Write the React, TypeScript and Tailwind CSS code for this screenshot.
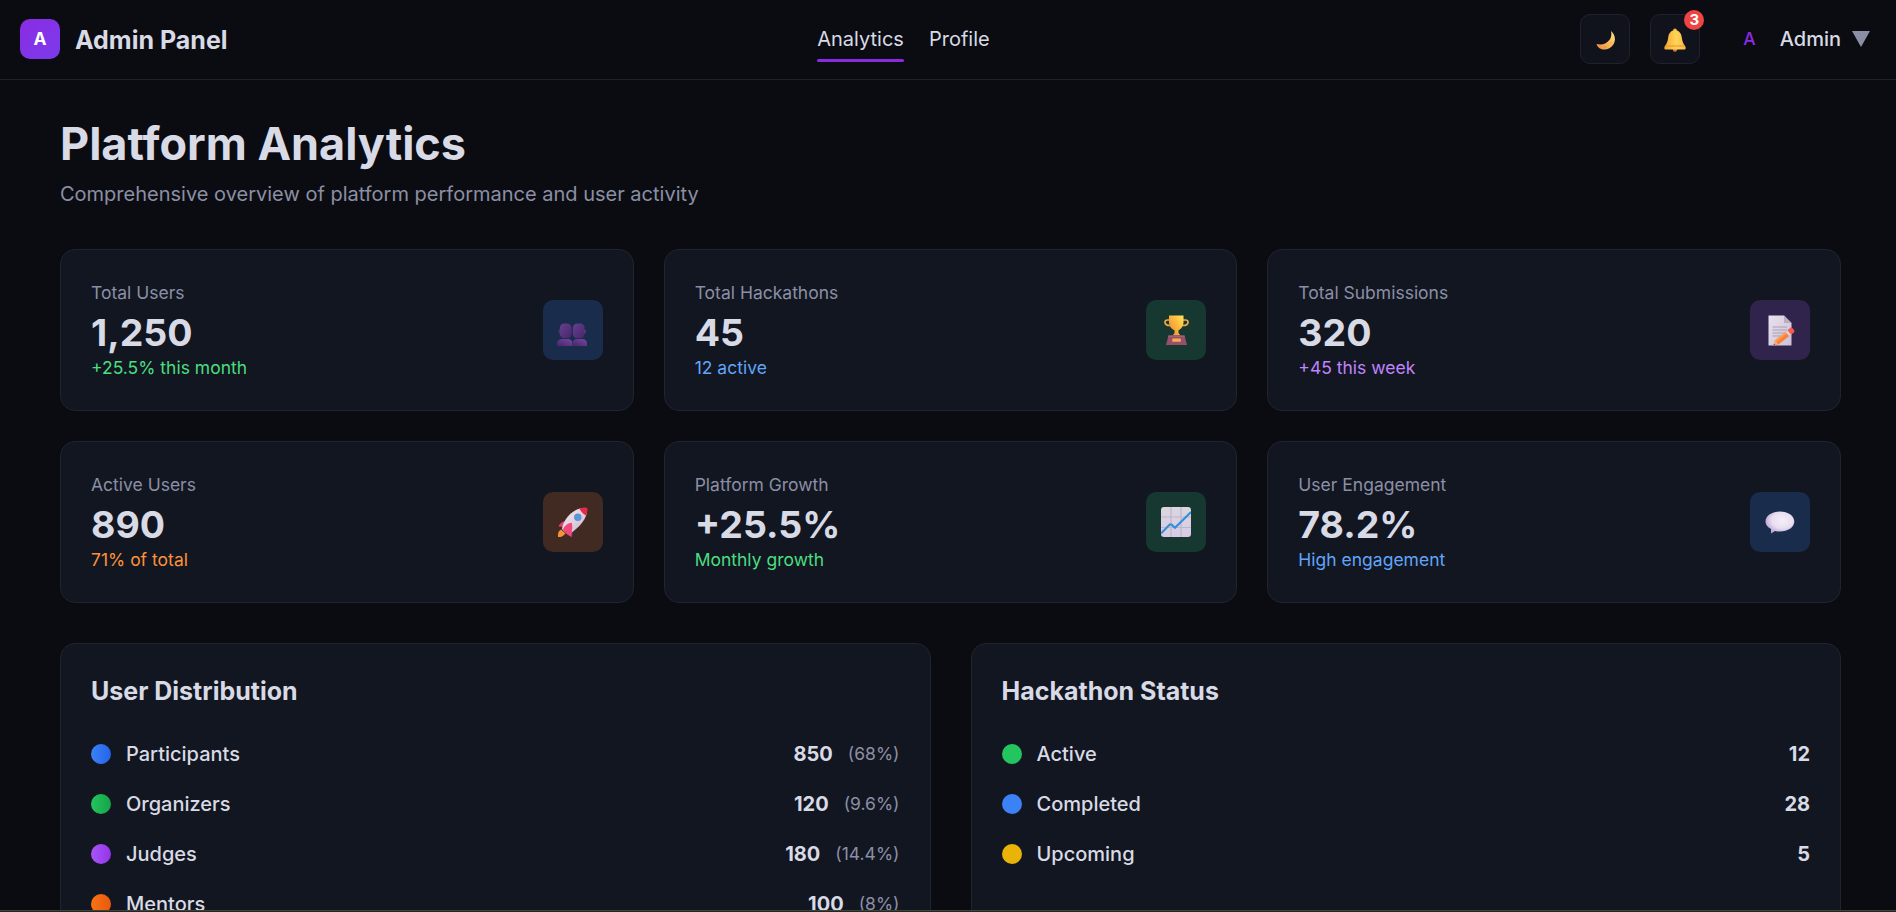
import type { ReactNode } from "react";

function MoonIcon() {
  return (
    <svg width="20" height="20" viewBox="0 0 20 20">
      <defs>
        <linearGradient id="moon" x1="0" y1="1" x2="1" y2="0">
          <stop offset="0" stopColor="#f08a3c" />
          <stop offset="0.5" stopColor="#f9b85a" />
          <stop offset="1" stopColor="#ffe487" />
        </linearGradient>
      </defs>
      <path d="M15 1C19.2 4.400 20 10 17.500 14.200C14.500 19.300 8 21 3.500 18.200C2 17.200 0.800 15.500 0.600 14C6 15.500 11 13.500 13.800 9.500C15.600 6.800 15.600 3.500 15 1Z" fill="url(#moon)" />
      <circle cx="9" cy="17" r="1.200" fill="#e89b48" />
      <circle cx="15.200" cy="12.500" r="1" fill="#efab55" />
    </svg>
  );
}

function BellIcon() {
  return (
    <svg width="22" height="24" viewBox="0 0 22 24">
      <defs>
        <linearGradient id="bell" x1="0" y1="0" x2="1" y2="0">
          <stop offset="0" stopColor="#f3a535" />
          <stop offset="0.55" stopColor="#ffd556" />
          <stop offset="1" stopColor="#f9b84a" />
        </linearGradient>
      </defs>
      <circle cx="11" cy="21.500" r="2.200" fill="#e2703f" />
      <circle cx="11" cy="2.300" r="1.900" fill="#f6b040" />
      <path d="M11 2.200C6.800 2.200 4.600 5.500 4.200 9.500C3.800 13.500 2.500 15.800 0.800 18.300C0 19.700 0.200 21.600 1.500 21.600H20.500C21.800 21.600 22 19.700 21.200 18.300C19.500 15.800 18.200 13.500 17.800 9.500C17.400 5.500 15.200 2.200 11 2.200Z" fill="url(#bell)" />
      <path d="M1.500 18H20.500" stroke="#e8932e" strokeWidth="1" />
    </svg>
  );
}

function UsersIcon() {
  return (
    <svg width="30" height="24" viewBox="0 0 30 24">
      <defs>
        <linearGradient id="bust" x1="0" y1="0" x2="1" y2="1">
          <stop offset="0" stopColor="#65408f" />
          <stop offset="1" stopColor="#472669" />
        </linearGradient>
        <linearGradient id="shoulders" x1="0" y1="1" x2="1" y2="0">
          <stop offset="0" stopColor="#45256c" />
          <stop offset="1" stopColor="#78479f" />
        </linearGradient>
      </defs>
      <path d="M0 23V20.500C0 17.500 2.500 16 5 16H11C13.500 16 15.500 17.500 15.500 20.500V23Z" fill="url(#shoulders)" />
      <path d="M15.500 23V20.500C15.500 17.500 17.500 16 20 16H25C28 16 30 17.500 30 20.500V23Z" fill="url(#shoulders)" />
      <ellipse cx="2.800" cy="8.500" rx="1.300" ry="2" fill="#523078" />
      <ellipse cx="27.700" cy="8.500" rx="1.300" ry="2" fill="#613989" />
      <rect x="2.800" y="0.500" width="11.800" height="14.800" rx="4.500" fill="url(#bust)" />
      <rect x="15.800" y="0.500" width="11.800" height="14.800" rx="4.500" fill="url(#bust)" />
    </svg>
  );
}

function TrophyIcon() {
  return (
    <svg width="25" height="30" viewBox="0 0 25 30">
      <defs>
        <linearGradient id="cup" x1="0" y1="0.800" x2="1" y2="0">
          <stop offset="0" stopColor="#f08c36" />
          <stop offset="0.500" stopColor="#fbb83e" />
          <stop offset="1" stopColor="#ffe85a" />
        </linearGradient>
      </defs>
      <path d="M6 5H3.500C1.800 5 1 6 1 7.200C1 9 3 10.500 6 10.500M19 5H21.500C23.200 5 24 6 24 7.200C24 9 22 10.500 19 10.500" fill="none" stroke="#f4a93c" strokeWidth="1.700" />
      <path d="M5 0.500H19.500V7C19.500 11.500 17.200 14 14.500 15.300V18L16.500 20.500H8.500L10.500 18V15.300C7.500 14 5 11.500 5 7Z" fill="url(#cup)" />
      <path d="M4.500 20.500H20.500L23 30H2Z" fill="#96506b" />
      <path d="M4.500 20.500H20.500L20.900 22H4.100Z" fill="#a85f72" />
      <rect x="8.300" y="23.500" width="8.500" height="3.300" rx="0.600" fill="#f5ad4e" />
    </svg>
  );
}

function MemoIcon() {
  return (
    <svg width="27" height="31" viewBox="0 0 27 31">
      <defs>
        <linearGradient id="paper" x1="0" y1="0" x2="1" y2="1">
          <stop offset="0" stopColor="#e9e2ef" />
          <stop offset="1" stopColor="#cdbfd6" />
        </linearGradient>
      </defs>
      <path d="M0.500 0.500H16L23.500 8V30.500H0.500Z" fill="url(#paper)" />
      <path d="M16 0.500V8H23.500Z" fill="#b9aec1" />
      <path d="M4.500 12H19M4.500 15H19M4.500 18H17M4.500 21H13" stroke="#aaa0b5" strokeWidth="1.200" />
      <path d="M5.500 30.500L7 25.500L19 16L22.500 20L10.500 29.500Z" fill="#fb7f38" />
      <path d="M7 25.500L19 16L20.300 17.500L8.300 27.200Z" fill="#ff9d4c" />
      <path d="M5.500 30.500L7 25.500L10.500 29.500Z" fill="#eeb08a" />
      <path d="M5.500 30.500L6 28.800L7.400 30Z" fill="#55364e" />
      <path d="M17.500 17L20.500 14.500L24 18.700L21 21Z" fill="#d8d1e2" />
      <path d="M19.500 15.300L22 13C23 12.300 24 12.500 24.800 13.400L26 15C26.700 16 26.500 17 25.700 17.700L23 19.600Z" fill="#f75b4e" />
    </svg>
  );
}

function RocketIcon() {
  return (
    <svg width="31" height="31" viewBox="0 0 31 31">
      <defs>
        <linearGradient id="hull" x1="0" y1="0" x2="1" y2="1">
          <stop offset="0" stopColor="#f5eff6" />
          <stop offset="1" stopColor="#c7b4ca" />
        </linearGradient>
      </defs>
      <path d="M4 22.500C1 24 0.800 27 1 30C2 30.200 5.500 30.500 8.500 26.500Z" fill="#f4923c" />
      <path d="M10 14C5 14 2.500 17 1.500 19.500L7 20Z" fill="#e0406e" />
      <path d="M4.500 22L15 30.500L16.500 23L10 15Z" fill="#4c3b7a" />
      <path d="M5 22C6 14 13 4 23 1.500C26 1 29.500 1 30 2C31 11 22 21 13 26.500C11 26.500 7 25 5 22Z" fill="url(#hull)" />
      <path d="M22.500 1.800C25 0.500 29 0.200 30 1C31 2 30.300 5.500 29 8.500C26.800 7.300 24 5.300 22.500 1.800Z" fill="#e8274d" />
      <path d="M6 22C8 18.500 11 16 14.800 15.800C16 20 14.500 25 14.500 30C11.500 28.500 7 25.500 6 22Z" fill="#f2497b" />
      <circle cx="20.800" cy="10.300" r="3.700" fill="#7d89ab" />
      <circle cx="20.800" cy="10.300" r="2.600" fill="#469eee" />
    </svg>
  );
}

function ChartIcon() {
  return (
    <svg width="30" height="30" viewBox="0 0 30 30">
      <defs>
        <linearGradient id="sheet" x1="0" y1="0" x2="0" y2="1">
          <stop offset="0" stopColor="#dad7df" />
          <stop offset="1" stopColor="#d9c9e7" />
        </linearGradient>
      </defs>
      <rect width="30" height="30" rx="3" fill="url(#sheet)" />
      <path d="M10 0V30M20 0V30M0 10H30M0 20.500H30" stroke="#bdb6c6" strokeWidth="1.200" />
      <path d="M0 26.500L8.500 17.700Q9.500 16.800 10.500 17.600L14 20.700L30 5" fill="none" stroke="#328fd8" strokeWidth="2.100" />
    </svg>
  );
}

function BubbleIcon() {
  return (
    <svg width="30" height="23" viewBox="0 0 30 23">
      <defs>
        <radialGradient id="bubble" cx="0.580" cy="0.400" r="0.600">
          <stop offset="0" stopColor="#f5eff8" />
          <stop offset="0.600" stopColor="#e9dff0" />
          <stop offset="1" stopColor="#bea8d3" />
        </radialGradient>
      </defs>
      <path d="M15 0.500C23 0.500 29.300 4.800 29.300 10.500C29.300 16.200 23 20.500 15 20.500C13 20.500 11.500 20.400 10 20L6 22.500V18C2.500 16.300 0.500 13.800 0.500 10.500C0.500 4.800 7 0.500 15 0.500Z" fill="url(#bubble)" />
    </svg>
  );
}

type Stat = { label: string; value: string; note: string; noteClass: string; tileClass: string; icon: ReactNode };

const stats: Stat[] = [
  { label: "Total Users", value: "1,250", note: "+25.5% this month", noteClass: "text-[#4ade80]", tileClass: "bg-[#192c4c] pt-2.5 pr-0.5", icon: <UsersIcon /> },
  { label: "Total Hackathons", value: "45", note: "12 active", noteClass: "text-[#60a5fa]", tileClass: "bg-[#163830]", icon: <TrophyIcon /> },
  { label: "Total Submissions", value: "320", note: "+45 this week", noteClass: "text-[#c084fc]", tileClass: "bg-[#30234c] pl-[3px]", icon: <MemoIcon /> },
  { label: "Active Users", value: "890", note: "71% of total", noteClass: "text-[#fb923c]", tileClass: "bg-[#402a22]", icon: <RocketIcon /> },
  { label: "Platform Growth", value: "+25.5%", note: "Monthly growth", noteClass: "text-[#4ade80]", tileClass: "bg-[#163830]", icon: <ChartIcon /> },
  { label: "User Engagement", value: "78.2%", note: "High engagement", noteClass: "text-[#60a5fa]", tileClass: "bg-[#192c4c]", icon: <BubbleIcon /> },
];

const distribution = [
  { label: "Participants", value: "850", share: "(68%)", dot: "from-[#3b82f6] to-[#2563eb]" },
  { label: "Organizers", value: "120", share: "(9.6%)", dot: "from-[#22c55e] to-[#16a34a]" },
  { label: "Judges", value: "180", share: "(14.4%)", dot: "from-[#a855f7] to-[#9333ea]" },
  { label: "Mentors", value: "100", share: "(8%)", dot: "from-[#f97316] to-[#ea580c]" },
];

const statuses = [
  { label: "Active", value: "12", dot: "bg-[#22c55e]" },
  { label: "Completed", value: "28", dot: "bg-[#3b82f6]" },
  { label: "Upcoming", value: "5", dot: "bg-[#eab308]" },
];

function Header() {
  return (
    <header className="flex h-20 shrink-0 items-center justify-between border-b border-[#1f222e] px-5 pb-px">
      <div className="flex items-center gap-[15px]">
        <div className="flex size-10 items-center justify-center rounded-[10px] bg-linear-to-br from-[#8a2be2] to-[#7c3aed] pt-px text-[17.5px] font-bold text-white">A</div>
        <span className="pt-0.5 text-[25px] leading-[38px] font-bold">Admin Panel</span>
      </div>
      <nav className="flex items-center gap-[25px] pr-px text-[20px]">
        <a className="relative">
          Analytics
          <span className="absolute inset-x-0 -bottom-[8px] h-[3px] rounded-full bg-[#8a2be2]" />
        </a>
        <a>Profile</a>
      </nav>
      <div className="flex items-center">
        <button className="flex size-[50px] items-center justify-center rounded-[10px] border border-[#1f222e] bg-[#10131b] pt-px pl-px">
          <MoonIcon />
        </button>
        <button className="relative ml-5 flex size-[50px] items-center justify-center rounded-[10px] border border-[#1f222e] bg-[#10131b] pt-0.5">
          <BellIcon />
          <span className="absolute -top-[5px] -right-[5px] flex size-5 items-center justify-center rounded-full bg-[#ef4444] text-[15px] font-bold text-white">3</span>
        </button>
        <div className="ml-[43px] flex items-center">
          <span className="pt-px text-[17.5px] font-medium text-[#8a2be2]">A</span>
          <span className="ml-6 text-[20px] font-medium">Admin</span>
          <svg className="ml-[11px] mr-[6px]" width="18" height="16" viewBox="0 0 18 16">
            <path d="M0 0H18L9 16Z" fill="#8b8fa5" />
          </svg>
        </div>
      </div>
    </header>
  );
}

function StatCard({ stat }: { stat: Stat }) {
  return (
    <div className="flex h-[162px] items-center justify-between rounded-[15px] border border-[#1f2430] bg-[#121620] px-[30px]">
      <div>
        <p className="text-[17.5px] leading-[25px] text-[#8b8fa5]">{stat.label}</p>
        <p className="mt-[5px] text-[37.5px] leading-[45px] font-bold">{stat.value}</p>
        <p className={"text-[17.5px] leading-[25px] " + stat.noteClass}>{stat.note}</p>
      </div>
      <div className={"flex size-[60px] items-center justify-center rounded-[10px] " + stat.tileClass}>{stat.icon}</div>
    </div>
  );
}

function Panel({ title, children }: { title: string; children: ReactNode }) {
  return (
    <section className="h-[350px] rounded-[15px] border border-[#1f2430] bg-[#121620] p-[30px]">
      <h2 className="text-[25px] leading-[35px] font-bold">{title}</h2>
      <div className="mt-[30px] flex flex-col gap-5">{children}</div>
    </section>
  );
}

export default function App() {
  return (
    <div className="flex h-[912px] flex-col overflow-hidden bg-[#0b0c11] font-['Inter',sans-serif] text-[#d8dae5]">
      <Header />
      <main className="min-h-0 flex-1 overflow-hidden pt-[39px] pr-[55px] pl-[60px]">
        <h1 className="text-[45px] leading-[50px] font-bold">Platform Analytics</h1>
        <p className="mt-[10px] text-[20px] leading-[30px] text-[#8b8fa5]">Comprehensive overview of platform performance and user activity</p>
        <div className="mt-10 grid grid-cols-3 gap-[30px]">
          {stats.map((s) => (
            <StatCard key={s.label} stat={s} />
          ))}
        </div>
        <div className="mt-10 grid grid-cols-2 gap-10">
          <Panel title="User Distribution">
            {distribution.map((d) => (
              <div key={d.label} className="flex h-[30px] items-center text-[20px]">
                <span className={"size-5 rounded-full bg-linear-to-r " + d.dot} />
                <span className="ml-[15px] flex-1 font-medium">{d.label}</span>
                <span className="font-bold">{d.value}</span>
                <span className="ml-[15px] text-[17.5px] text-[#8b8fa5]">{d.share}</span>
              </div>
            ))}
          </Panel>
          <Panel title="Hackathon Status">
            {statuses.map((s) => (
              <div key={s.label} className="flex h-[30px] items-center text-[20px]">
                <span className={"size-5 rounded-full " + s.dot} />
                <span className="ml-[15px] flex-1 font-medium">{s.label}</span>
                <span className="font-bold">{s.value}</span>
              </div>
            ))}
          </Panel>
        </div>
      </main>
      <div className="h-0.5 shrink-0 border-t border-[#3f433c] bg-[#222a20]" />
    </div>
  );
}
